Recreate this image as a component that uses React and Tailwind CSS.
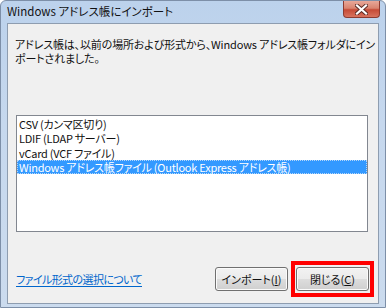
import React from "react";

const font = "font-['Noto_Sans_CJK_JP','Noto_Sans',sans-serif] [font-feature-settings:'palt']";

function CloseX() {
  return (
    <svg width="13" height="11" viewBox="0 0 13 11">
      <path d="M2 1.5 L11 9.5 M11 1.5 L2 9.5" stroke="#5a2a24" strokeWidth="4" strokeLinecap="square" />
      <path d="M2 1.5 L11 9.5 M11 1.5 L2 9.5" stroke="#ffffff" strokeWidth="2.2" strokeLinecap="square" />
    </svg>
  );
}

function Button({ children }) {
  return (
    <div className="w-[73px] h-[24px] rounded-[3px] border border-[#707070] bg-[linear-gradient(#f2f2f2_0%,#ebebeb_50%,#dddddd_50%,#cfcfcf_100%)] shadow-[inset_0_0_0_1px_#fbfbfb] flex items-center justify-center text-[11px] leading-[14px] text-[#111]">
      {children}
    </div>
  );
}

export default function App() {
  return (
    <div className={`w-[386px] h-[308px] flex flex-col rounded-t-[6px] border border-[#7d8fa8] bg-[linear-gradient(#bcd2ec,#c6d8ee_40%,#cbdbee)] ${font}`}>
      <div className="h-[22px] flex items-start justify-between">
        <div className="pl-[6px] pt-[3px] text-[11.5px] leading-[14px] text-[#111] whitespace-nowrap">
          Windows アドレス帳にインポート
        </div>
        <div className="mr-[5px] w-[37px] h-[17px] rounded-b-[4px] border border-t-0 border-[#8c3b31] bg-[linear-gradient(#e8a899,#d98470_45%,#c64a36_55%,#d8735e)] flex items-center justify-center">
          <CloseX />
        </div>
      </div>
      <div className="mx-[6px] h-[281px] border border-[#8e9db0] bg-[#f0f0f0] flex flex-col">
        <div className="pl-[7px] pt-[14px] text-[11px] leading-[13.5px] text-[#111] whitespace-nowrap tracking-[-0.15px]">
          <div>アドレス帳は、以前の場所および形式から、Windows アドレス帳フォルダにイン</div>
          <div>ポートされました。</div>
        </div>
        <div className="ml-[8px] mt-[50px] w-[352px] h-[117px] border border-[#828790] bg-white pt-[1px] text-[11px] text-[#111] whitespace-nowrap tracking-[-0.25px]">
          <div className="h-[14px] leading-[14px] pl-[2px]">CSV (カンマ区切り)</div>
          <div className="h-[14.5px] leading-[14.5px] pl-[2px]">LDIF (LDAP サーバー)</div>
          <div className="h-[14.5px] leading-[14.5px] pl-[2px]">vCard (VCF ファイル)</div>
          <div className="h-[14px] leading-[12px] pl-[1px] bg-[#3399ff] text-white border border-dotted border-[#b5d6f8]">
            Windows アドレス帳ファイル (Outlook Express アドレス帳)
          </div>
        </div>
        <div className="mt-[29px] flex items-center pl-[8px] pr-[4px]">
          <a className="text-[11px] leading-[14px] text-[#0066cc] underline underline-offset-[2px] whitespace-nowrap tracking-[-0.6px]">ファイル形式の選択について</a>
          <div className="ml-auto mr-[3px]">
            <Button>
              インポート(<span className="underline">I</span>)
            </Button>
          </div>
          <div className="border-4 border-[#ff0000] px-[1px] py-[2px]">
            <Button>
              閉じる(<span className="underline">C</span>)
            </Button>
          </div>
        </div>
      </div>
    </div>
  );
}
